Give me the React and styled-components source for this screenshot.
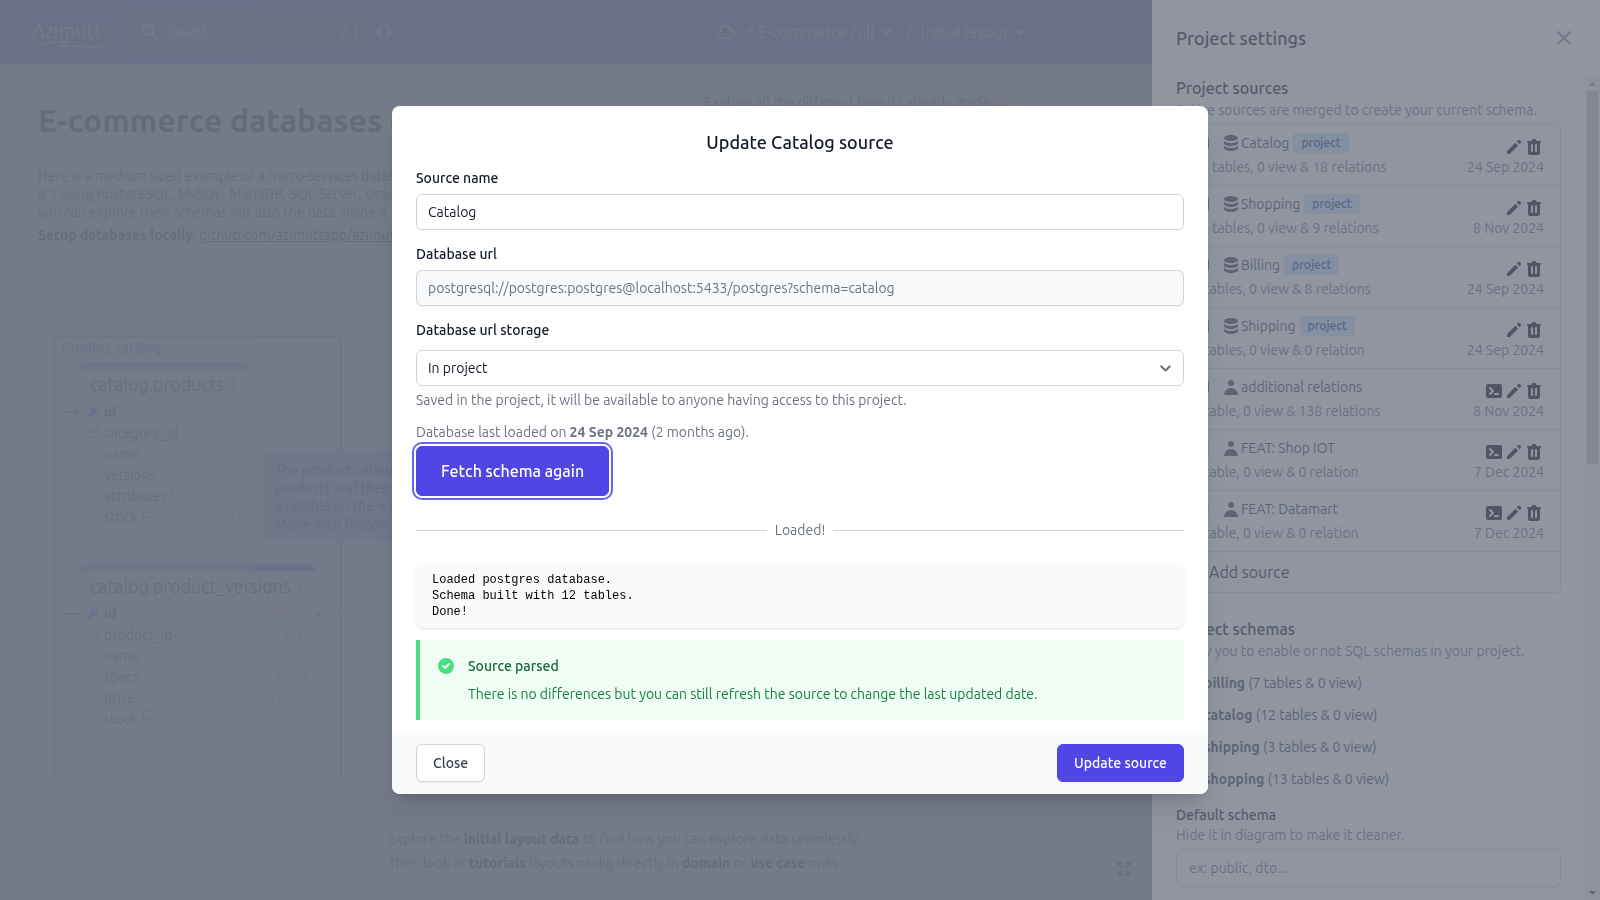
import React from "react";
import styled, { createGlobalStyle } from "styled-components";
import {
  HiArrowsExpand,
  HiCheckCircle,
  HiChevronDown,
  HiCog,
  HiDatabase,
  HiDotsVertical,
  HiKey,
  HiOutlineChat,
  HiOutlineCloud,
  HiOutlineExternalLink,
  HiPencil,
  HiPlus,
  HiQuestionMarkCircle,
  HiSearch,
  HiShare,
  HiTerminal,
  HiTrash,
  HiUser,
} from "react-icons/hi";

const font = `"Ubuntu", "Roboto", "Open Sans", sans-serif`;
const mono = `"Liberation Mono", monospace`;

const GlobalStyle = createGlobalStyle`
  *, *::before, *::after { box-sizing: border-box; }
  body { margin: 0; font: 400 14px/20px ${font}; color: #111827; background: #fff; }
  h1, h2, h3, p, pre, ul, fieldset { margin: 0; padding: 0; border: 0; }
  ul { list-style: none; }
  button, input, select { font: inherit; color: inherit; margin: 0; }
  button { cursor: pointer; background: none; border: 0; padding: 0; }
  svg { display: block; flex: none; }
  b { font-weight: 700; }
`;

/* ---------- page and navigation bar ---------- */

const Page = styled.div`
  display: flex;
  flex-direction: column;
  height: 100vh;
  overflow: hidden;
`;

const Navbar = styled.header`
  display: flex;
  align-items: center;
  justify-content: space-between;
  flex: none;
  height: 64px;
  padding: 0 32px;
  background: #5b5cf0;
  color: #fff;
`;

const NavGroup = styled.div`
  display: flex;
  align-items: center;
  gap: ${(p) => p.$gap || 0}px;
  min-width: ${(p) => p.$min || 0}px;
  justify-content: ${(p) => (p.$end ? "flex-end" : "flex-start")};
`;

const Logo = styled.a`
  display: flex;
  flex-direction: column;
  width: 72px;
  margin-right: 24px;
  padding-top: 6px;
  color: #fffff0;
  text-decoration: none;
  font: 300 20px/20px ${font};
`;

const SearchBox = styled.label`
  display: flex;
  align-items: center;
  gap: 8px;
  width: 236px;
  height: 40px;
  margin-right: 10px;
  padding: 0 7px 0 12px;
  border-radius: 6px;
  background: #6c6ec4;
  color: #7fe4ff;
  font-size: 14px;
`;

const SearchInput = styled.input`
  flex: 1;
  min-width: 0;
  padding: 0;
  font-size: 14px;
  border: 0;
  background: none;
  outline: 0;
  &::placeholder { color: #a0ffff; opacity: 1; }
`;

const KeyHint = styled.kbd`
  display: flex;
  align-items: center;
  justify-content: center;
  width: 24px;
  height: 26px;
  border: 1px solid #7fe4ff;
  border-radius: 4px;
  color: #a0ffff;
  font: 400 16px/20px ${font};
`;

const NavButton = styled.button`
  display: flex;
  align-items: center;
  gap: 2px;
  font-size: 16px;
  line-height: 24px;
  color: #ffffee;
`;

const Slash = styled.span`
  padding: 0 9px;
  font-size: 18px;
  color: #d8d9e8;
`;

/* ---------- diagram ---------- */

const Canvas = styled.main`
  position: relative;
  flex: 1;
  overflow: hidden;
`;

const Node = styled.div`
  position: absolute;
  left: ${(p) => p.$x}px;
  top: ${(p) => p.$y}px;
  white-space: nowrap;
`;

const BoardTitle = styled.h1`
  font-size: 32px;
  line-height: 40px;
  font-weight: 700;
  color: #0f172a;
`;

const Note = styled.div`
  display: flex;
  flex-direction: column;
  gap: ${(p) => p.$gap || 6}px;
  line-height: 18px;
  color: #334155;
  a { color: #1e293b; }
  b { color: #1e293b; }
`;

const Hint = styled.p`
  display: flex;
  align-items: center;
  gap: 6px;
  color: #475569;
`;

const Group = styled(Node)`
  width: 289px;
  height: 441px;
  padding: 0 7px;
  border: 2px solid #7db8fb;
  background: rgba(147, 197, 253, 0.2);
  color: #3f76e0;
`;

const Links = styled.svg`
  position: absolute;
  inset: 0;
`;

const Memo = styled(Node)`
  width: 260px;
  padding: 11px 12px 9px;
  border-radius: 4px;
  background: #a6dcff;
  line-height: 18px;
  color: #1e3a4a;
`;

const TableCard = styled(Node)`
  width: ${(p) => p.$w}px;
  border-top: 7px solid #60a5fa;
  border-radius: 8px;
  background: #fff;
  box-shadow: 0 2px 4px rgba(0, 0, 0, 0.16);
`;

const TableName = styled.h3`
  display: flex;
  align-items: center;
  gap: 2px;
  height: 32px;
  padding: 0 0 2px 11px;
  font-size: 18px;
  font-weight: 300;
  color: #030712;
  svg { color: #8a94a6; }
`;

const Column = styled.li`
  display: flex;
  align-items: center;
  height: 21px;
  padding: 0 8px;
  color: #334155;
  font-weight: ${(p) => (p.$key ? 700 : 400)};
`;

const ColumnIcon = styled.span`
  width: 17px;
  color: ${(p) => (p.$blue ? "#3b82f6" : "#7c8799")};
`;

const ColumnNote = styled.span`
  align-self: flex-start;
  margin-left: 4px;
  color: #8a95a6;
`;

const ColumnType = styled.span`
  margin-left: auto;
  padding-right: ${(p) => (p.$required ? 5 : 0)}px;
  font-weight: 400;
  color: #a4afbf;
`;

const MoreColumns = styled.li`
  height: 21px;
  padding-left: 25px;
  color: #a4afbf;
`;

const ZoomBar = styled.div`
  position: absolute;
  right: 400px;
  bottom: 12px;
  display: flex;
  width: 95px;
  height: 38px;
  border: 1px solid #c3c9d3;
  border-radius: 6px;
`;

const ZoomButton = styled.button`
  display: flex;
  align-items: center;
  justify-content: center;
  width: 37px;
  border-right: 1px solid #c3c9d3;
  color: #4b5563;
`;

/* ---------- overlays and settings panel ---------- */

const Backdrop = styled.div`
  position: fixed;
  inset: 0;
  background: rgba(107, 114, 128, 0.75);
`;

const Panel = styled.aside`
  position: fixed;
  inset: 0 0 0 auto;
  display: flex;
  flex-direction: column;
  width: 448px;
  background: #fff;
`;

const PanelHeader = styled.div`
  display: flex;
  align-items: center;
  justify-content: space-between;
  flex: none;
  height: 76px;
  padding: 0 24px;
`;

const PanelTitle = styled.h2`
  font-size: 18px;
  line-height: 28px;
  font-weight: 500;
`;

const IconButton = styled.button`
  color: ${(p) => p.$tint || "#030712"};
`;

const PanelBody = styled.div`
  display: flex;
  flex: 1;
  min-height: 0;
`;

const PanelContent = styled.div`
  flex: 1;
  min-width: 0;
  overflow: hidden;
  padding: 0 24px;
`;

const Scrollbar = styled.div`
  display: flex;
  flex-direction: column;
  align-items: center;
  width: 15px;
  background: #f1f1f1;
`;

const ScrollArrow = styled.svg`
  width: 15px;
  height: 15px;
  fill: ${(p) => (p.$dim ? "#a3a3a3" : "#505050")};
`;

const ScrollTrack = styled.div`
  flex: 1;
  width: 11px;
`;

const ScrollThumb = styled.div`
  height: 47%;
  background: #c1c1c1;
`;

const Section = styled.section`
  margin-bottom: 24px;
`;

const SectionTitle = styled.h3`
  font-size: 16px;
  line-height: 24px;
  font-weight: 500;
`;

const Muted = styled.p`
  color: #6b7280;
  b { font-weight: 700; }
`;

const SourceList = styled.ul`
  margin-top: 4px;
  border: 1px solid #d1d5db;
  border-radius: 6px;
`;

const SourceItem = styled.li`
  padding: 8px 16px;
  border-bottom: 1px solid #d1d5db;
`;

const SourceTop = styled.div`
  display: flex;
  justify-content: space-between;
  height: 24px;
`;

const SourceLabel = styled.label`
  display: flex;
  align-items: center;
  height: 20px;
  color: #374151;
  svg { color: #374151; }
`;

const Checkbox = styled.input.attrs({ type: "checkbox" })`
  appearance: none;
  width: 16px;
  height: 16px;
  margin: 0 12px 0 0;
  border: 1px solid ${(p) => (p.defaultChecked ? "#4f46e5" : "#d1d5db")};
  border-radius: 4px;
  background: ${(p) => (p.defaultChecked ? "#4f46e5" : "#fff")};
`;

const Badge = styled.span`
  margin-left: 4px;
  padding: 0 8px;
  border-radius: 4px;
  background: #cfe6fe;
  color: #1e40af;
  font-size: 12px;
  line-height: 20px;
  font-weight: 500;
`;

const SourceActions = styled.div`
  display: flex;
  align-items: flex-end;
`;

const SourceMeta = styled.div`
  display: flex;
  justify-content: space-between;
  color: #6b7280;
`;

const AddSource = styled.button`
  display: flex;
  align-items: center;
  width: 100%;
  height: 40px;
  padding: 0 16px;
  font-size: 16px;
  color: #111827;
`;

const SchemaLabel = styled.label`
  display: flex;
  align-items: center;
  margin-top: 12px;
  color: #374151;
  span { white-space: pre; }
`;

const DefaultSchema = styled.div`
  margin-top: 16px;
`;

/* ---------- form parts ---------- */

const Label = styled.label`
  display: block;
  font-weight: 500;
  color: #111827;
`;

const TextInput = styled.input`
  display: block;
  width: 100%;
  height: ${(p) => p.$h || 36}px;
  margin-top: ${(p) => p.$mt || 6}px;
  padding: 0 ${(p) => p.$px || 11}px;
  border: 1px solid #d1d5db;
  border-radius: 6px;
  background: #fff;
  box-shadow: 0 1px 2px rgba(0, 0, 0, 0.05);
  &:disabled { background: #f9fafb; color: #6b7280; }
  &::placeholder { color: #6b7280; opacity: 1; }
`;

const SelectWrap = styled.div`
  position: relative;
  margin: 10px 0 4px;
  svg {
    position: absolute;
    right: 8px;
    top: 8px;
    pointer-events: none;
  }
`;

const Select = styled.select`
  appearance: none;
  display: block;
  width: 100%;
  height: 36px;
  padding: 0 40px 0 11px;
  border: 1px solid #d1d5db;
  border-radius: 6px;
  background: #fff;
`;

/* ---------- modal ---------- */

const ModalLayer = styled.div`
  position: fixed;
  inset: 0;
  display: flex;
  align-items: center;
  justify-content: center;
`;

const Dialog = styled.div`
  width: 100%;
  max-width: 816px;
  overflow: hidden;
  border-radius: 8px;
  background: #fff;
  box-shadow: 0 20px 25px -5px rgba(0, 0, 0, 0.1), 0 8px 10px -6px rgba(0, 0, 0, 0.1);
`;

const DialogBody = styled.div`
  padding: 24px 24px 12px;
`;

const DialogTitle = styled.h2`
  font-size: 18px;
  line-height: 24px;
  font-weight: 500;
  text-align: center;
`;

const Field = styled.div`
  margin-top: 14px;
`;

const LoadedOn = styled(Muted)`
  margin: 12px 0 4px;
`;

const Button = styled.button`
  display: block;
  height: ${(p) => (p.$large ? 50 : 38)}px;
  padding: 0 ${(p) => (p.$large ? 24 : 16)}px;
  border: 1px solid ${(p) => (p.$primary ? "#4f46e5" : "#d1d5db")};
  border-radius: 6px;
  font-size: ${(p) => (p.$large ? 16 : 14)}px;
  font-weight: 500;
  color: ${(p) => (p.$primary ? "#fff" : "#374151")};
  background: ${(p) => (p.$primary ? "#4f46e5" : "#fff")};
  box-shadow: ${(p) => (p.$focused ? "0 0 0 2px #fff, 0 0 0 4px #6366f1" : "0 1px 2px rgba(0, 0, 0, 0.05)")};
`;

const Divider = styled.div`
  display: flex;
  align-items: center;
  gap: 8px;
  margin: 24px 0;
  color: #6b7280;
  &::before, &::after {
    content: "";
    flex: 1;
    height: 1px;
    background: #d1d5db;
  }
`;

const Log = styled.pre`
  padding: 8px 16px;
  border-radius: 8px;
  background: #f9fafb;
  box-shadow: 0 1px 3px rgba(0, 0, 0, 0.1), 0 1px 2px -1px rgba(0, 0, 0, 0.1);
  color: #000;
  font: 400 12px/16px ${mono};
`;

const Alert = styled.div`
  display: flex;
  gap: 12px;
  margin-top: 12px;
  padding: 16px;
  border-left: 4px solid #4ade80;
  background: #f0fdf4;
  color: #15803d;
  > svg { color: #4ade80; }
`;

const AlertTitle = styled.h3`
  margin-bottom: 8px;
  font-size: 14px;
  line-height: 20px;
  font-weight: 500;
  color: #166534;
`;

const DialogFooter = styled.div`
  display: flex;
  justify-content: space-between;
  padding: 12px 24px;
  background: #f9fafb;
`;

/* ---------- data ---------- */

const tables = [
  {
    name: "catalog.products", x: 79, y: 298, w: 171, more: "... 6 more columns",
    columns: [
      { name: "id", type: "Int", pk: true },
      { name: "category_id", type: "Int?", fk: "blue" },
      { name: "name", type: "Text?" },
      { name: "versions", type: "Json?", note: true },
      { name: "attributes", type: "Json?", note: true },
      { name: "stock", type: "Int?", note: true },
    ],
  },
  {
    name: "catalog.product_versions", x: 79, y: 500, w: 237, more: "... 3 more columns",
    columns: [
      { name: "id", type: "Int", pk: true },
      { name: "product_id", type: "Int?", fk: "gray" },
      { name: "name", type: "Text?" },
      { name: "specs", type: "Json?", note: true },
      { name: "price", type: "Float?" },
      { name: "stock", type: "Int?", note: true },
    ],
  },
];

const sources = [
  { name: "Catalog", db: true, on: true, meta: "12 tables, 0 view & 18 relations", date: "24 Sep 2024" },
  { name: "Shopping", db: true, on: true, meta: "13 tables, 0 view & 9 relations", date: "8 Nov 2024" },
  { name: "Billing", db: true, on: true, meta: "7 tables, 0 view & 8 relations", date: "24 Sep 2024" },
  { name: "Shipping", db: true, on: true, meta: "3 tables, 0 view & 0 relation", date: "24 Sep 2024" },
  { name: "additional relations", on: true, meta: "0 table, 0 view & 138 relations", date: "8 Nov 2024" },
  { name: "FEAT: Shop IOT", meta: "0 table, 0 view & 0 relation", date: "7 Dec 2024" },
  { name: "FEAT: Datamart", meta: "0 table, 0 view & 0 relation", date: "7 Dec 2024" },
];

const schemas = [
  ["billing", "(7 tables & 0 view)"],
  ["catalog", "(12 tables & 0 view)"],
  ["shipping", "(3 tables & 0 view)"],
  ["shopping", "(13 tables & 0 view)"],
];

/* ---------- components ---------- */

function TopBar() {
  return (
    <Navbar>
      <NavGroup>
        <Logo href="#" aria-label="Azimutt">
          Λzimutt
          <svg width="70" height="8" viewBox="0 0 70 8" fill="none" stroke="currentColor" strokeWidth="1.3">
            <path d="M3 6C14 1 26 0 37 1L29 5C42 4 54 7 69 6" />
          </svg>
        </Logo>
        <SearchBox>
          <HiSearch size={20} color="#d8f4ff" />
          <SearchInput placeholder="Search" aria-label="Search" />
          <KeyHint>/</KeyHint>
        </SearchBox>
        <IconButton $tint="#7fe4ff" aria-label="Help"><HiQuestionMarkCircle size={20} /></IconButton>
      </NavGroup>
      <NavGroup>
        <NavGroup $gap={10}>
          <HiOutlineCloud size={22} />
          <NavButton>* E-commerce full <HiChevronDown size={20} /></NavButton>
        </NavGroup>
        <Slash>/</Slash>
        <NavButton>initial layout <HiChevronDown size={20} /></NavButton>
      </NavGroup>
      <NavGroup $gap={12} $min={216} $end>
        <IconButton $tint="#fff" aria-label="Share"><HiShare size={24} /></IconButton>
        <IconButton $tint="#fff" aria-label="Settings"><HiCog size={24} /></IconButton>
      </NavGroup>
    </Navbar>
  );
}

function ColumnRow({ column }) {
  return (
    <Column $key={column.pk}>
      <ColumnIcon $blue={column.pk || column.fk === "blue"}>
        {column.pk && <HiKey size={13} />}
        {column.fk && <HiOutlineExternalLink size={13} />}
      </ColumnIcon>
      {column.name}
      {column.note && <ColumnNote><HiOutlineChat size={14} /></ColumnNote>}
      <ColumnType $required={column.pk}>{column.type}</ColumnType>
    </Column>
  );
}

function Diagram() {
  return (
    <Canvas>
      <Node $x={38} $y={36}><BoardTitle>E-commerce databases example</BoardTitle></Node>
      <Node $x={38} $y={103}>
        <Note $gap={5}>
          <p>
            Here is a medium sized example of a micro-services database.<br />
            It's using PostgreSQL, MySQL, MariaDB, SQL Server, Oracle<br />
            you can explore their schemas but also the data inside if
          </p>
          <p><b>Setup databases locally</b>: <a href="#setup">github.com/azimuttapp/azimutt</a></p>
        </Note>
      </Node>
      <Node $x={704} $y={28}>
        <Hint>
          Explore all the different layouts already made
          <svg width="14" height="14" viewBox="0 0 14 14" fill="#ffe03d">
            <path d="M5 1a1 1 0 0 1 2 0v5h1.500a1 1 0 0 1 1 .5h2a1.500 1.500 0 0 1 1.500 1.500v3a3 3 0 0 1-3 3H6a3 3 0 0 1-2-1L0 8.500C0 7 2 7 3 8l2 1z" />
          </svg>
        </Hint>
      </Node>
      <Group $x={53} $y={272}>Product catalog</Group>
      <Links width="500" height="760" viewBox="0 0 500 760" fill="none" stroke="#94a0b2" strokeWidth="1">
        <path d="M61 348H77M61 550H79" strokeWidth="2" stroke="#7c8799" />
        <circle cx="77" cy="348" r="2" fill="#7c8799" stroke="none" />
        <circle cx="318" cy="550" r="2" fill="#7c8799" stroke="none" />
        <path d="M77 349C64 400 64 470 64 530C66 565 68 571 79 571M250 359H268" strokeDasharray="3 3" />
        <path d="M318 550C345 550 365 548 400 535" />
        <path d="M318 550C345 549 365 549 400 548" strokeDasharray="3 3" />
      </Links>
      {tables.map((table) => (
        <TableCard key={table.name} $x={table.x} $y={table.y} $w={table.w}>
          <TableName>{table.name}<HiDotsVertical size={16} /></TableName>
          <ul>
            {table.columns.map((column) => <ColumnRow key={column.name} column={column} />)}
            <MoreColumns>{table.more}</MoreColumns>
          </ul>
        </TableCard>
      ))}
      <Memo $x={263} $y={386}>
        The product catalog stores<br />products and their versions<br />available on the website<br />
        Made with <i>PostgreSQL</i>
      </Memo>
      <Node $x={388} $y={766}>
        <Note>
          <p>Explore the <b>initial layout data</b> to find how you can explore data seamlessly.</p>
          <p>Then look at <b>tutorials</b> layouts or dig directly in <b>domain</b> or <b>use case</b> ones…</p>
        </Note>
      </Node>
      <ZoomBar>
        <ZoomButton aria-label="Fit to screen"><HiArrowsExpand size={20} /></ZoomButton>
      </ZoomBar>
    </Canvas>
  );
}

function SourceRow({ source }) {
  return (
    <SourceItem>
      <SourceTop>
        <SourceLabel>
          <Checkbox defaultChecked={source.on} />
          {source.db ? <HiDatabase size={20} /> : <HiUser size={20} />}
          {source.name}
          {source.db && <Badge>project</Badge>}
        </SourceLabel>
        <SourceActions>
          {!source.db && <IconButton aria-label="Edit as SQL"><HiTerminal size={20} /></IconButton>}
          <IconButton aria-label="Edit source"><HiPencil size={20} /></IconButton>
          <IconButton aria-label="Delete source"><HiTrash size={20} /></IconButton>
        </SourceActions>
      </SourceTop>
      <SourceMeta><span>{source.meta}</span><span>{source.date}</span></SourceMeta>
    </SourceItem>
  );
}

function SettingsPanel() {
  return (
    <Panel>
      <PanelHeader>
        <PanelTitle>Project settings</PanelTitle>
        <IconButton $tint="#8b929e" aria-label="Close settings">
          <svg width="24" height="24" viewBox="0 0 24 24" fill="none" stroke="currentColor" strokeWidth="2" strokeLinecap="round">
            <path d="M6 6L18 18M18 6L6 18" />
          </svg>
        </IconButton>
      </PanelHeader>
      <PanelBody>
        <PanelContent>
          <Section>
            <SectionTitle>Project sources</SectionTitle>
            <Muted>Active sources are merged to create your current schema.</Muted>
            <SourceList>
              {sources.map((source) => <SourceRow key={source.name} source={source} />)}
              <li><AddSource><HiPlus size={16} />Add source</AddSource></li>
            </SourceList>
          </Section>
          <Section>
            <SectionTitle>Project schemas</SectionTitle>
            <Muted>Allow you to enable or not SQL schemas in your project.</Muted>
            {schemas.map(([name, count]) => (
              <SchemaLabel key={name}>
                <Checkbox defaultChecked />
                <span><b>{name}</b> {count}</span>
              </SchemaLabel>
            ))}
            <DefaultSchema>
              <Label htmlFor="default-schema">Default schema</Label>
              <Muted>Hide it in diagram to make it cleaner.</Muted>
              <TextInput id="default-schema" placeholder="ex: public, dto..." $h={38} $mt={4} $px={12} />
            </DefaultSchema>
          </Section>
        </PanelContent>
        <Scrollbar>
          <ScrollArrow $dim viewBox="0 0 15 15"><path d="M7.500 6L11.500 10H3.500z" /></ScrollArrow>
          <ScrollTrack><ScrollThumb /></ScrollTrack>
          <ScrollArrow viewBox="0 0 15 15"><path d="M7.500 10L11.500 6H3.500z" /></ScrollArrow>
        </Scrollbar>
      </PanelBody>
    </Panel>
  );
}

function UpdateSourceDialog() {
  return (
    <ModalLayer>
      <Dialog role="dialog" aria-labelledby="dialog-title">
        <DialogBody>
          <DialogTitle id="dialog-title">Update Catalog source</DialogTitle>
          <Field>
            <Label htmlFor="source-name">Source name</Label>
            <TextInput id="source-name" defaultValue="Catalog" />
          </Field>
          <Field>
            <Label htmlFor="database-url">Database url</Label>
            <TextInput
              id="database-url"
              disabled
              defaultValue="postgresql://postgres:postgres@localhost:5433/postgres?schema=catalog"
            />
          </Field>
          <Field>
            <Label htmlFor="url-storage">Database url storage</Label>
            <SelectWrap>
              <Select id="url-storage"><option>In project</option></Select>
              <svg width="21" height="21" viewBox="0 0 20 20" fill="none" stroke="#6b7280" strokeWidth="2" strokeLinecap="round" strokeLinejoin="round">
                <path d="M6 8l4 4 4-4" />
              </svg>
            </SelectWrap>
            <Muted>Saved in the project, it will be available to anyone having access to this project.</Muted>
          </Field>
          <LoadedOn>Database last loaded on <b>24 Sep 2024</b> (2 months ago).</LoadedOn>
          <Button $primary $large $focused>Fetch schema again</Button>
          <Divider>Loaded!</Divider>
          <Log>{"Loaded postgres database.\nSchema built with 12 tables.\nDone!"}</Log>
          <Alert>
            <HiCheckCircle size={20} />
            <div>
              <AlertTitle>Source parsed</AlertTitle>
              <p>There is no differences but you can still refresh the source to change the last updated date.</p>
            </div>
          </Alert>
        </DialogBody>
        <DialogFooter>
          <Button>Close</Button>
          <Button $primary>Update source</Button>
        </DialogFooter>
      </Dialog>
    </ModalLayer>
  );
}

export default function App() {
  return (
    <>
      <GlobalStyle />
      <Page>
        <TopBar />
        <Diagram />
      </Page>
      <Backdrop />
      <SettingsPanel />
      <Backdrop />
      <UpdateSourceDialog />
    </>
  );
}
